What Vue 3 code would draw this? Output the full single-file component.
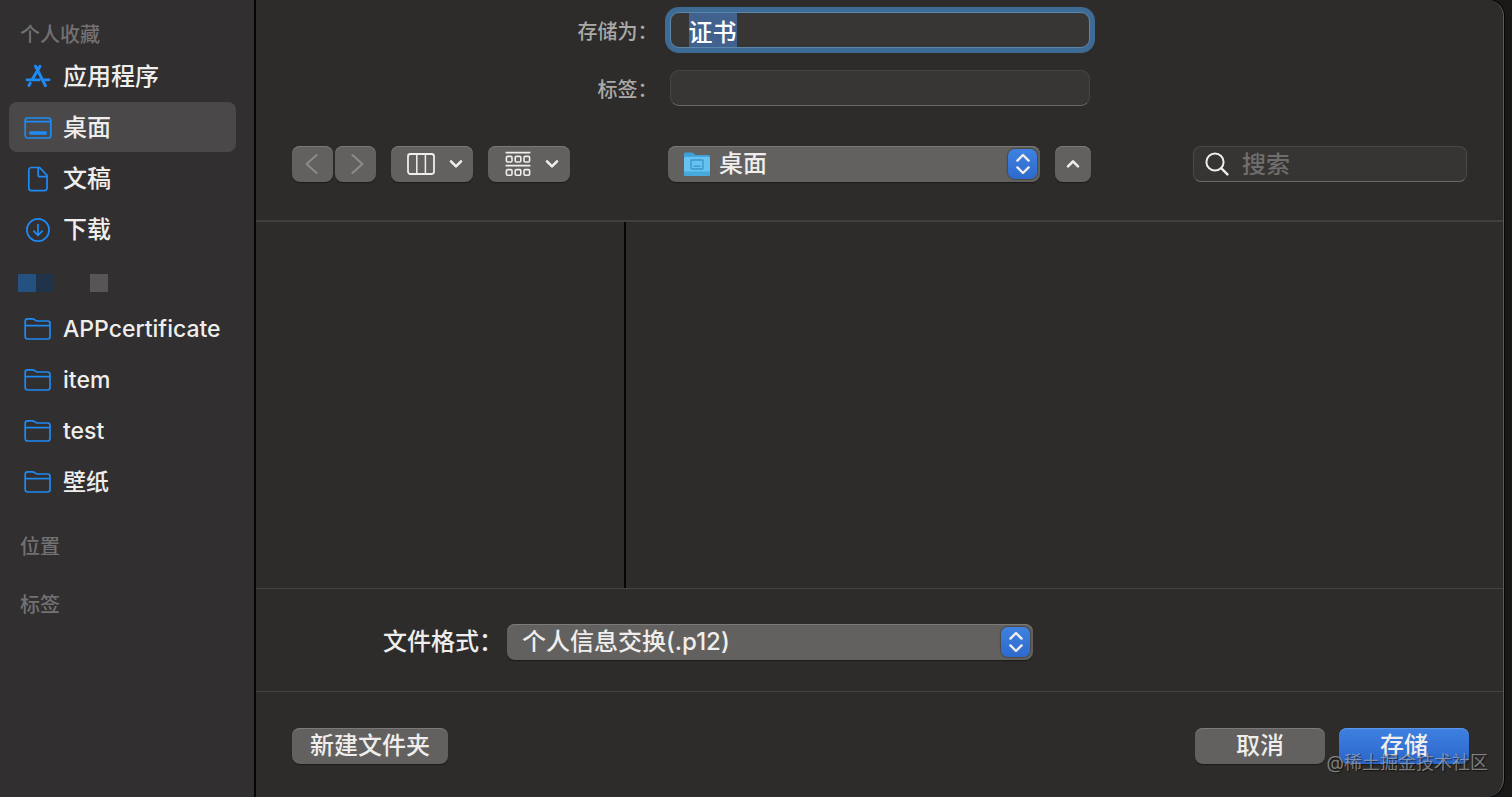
<template>
  <div class="screen">
    <div class="dialog">

      <!-- Sidebar -->
      <nav class="sidebar">
        <h2 class="section-title">个人收藏</h2>
        <ul class="places">
          <li v-for="place in places" :key="place.name">
            <a
              href="#"
              class="place"
              :class="{ active: place.name === current }"
              @click.prevent="current = place.name"
            >
              <svg class="place-icon" width="30" height="30" viewBox="0 0 30 30" fill="none"
                stroke="currentColor" stroke-width="1.7" stroke-linecap="round" stroke-linejoin="round">
                <template v-if="place.icon === 'apps'">
                  <path stroke-width="3" d="M12.6 4.2l9.8 19.4M17 4.2L9.400 17.200M7.200 21.200l-1.200 2.200"></path>
                  <path stroke-width="2.8" d="M4 17.800h12.400M21.600 17.800h4.600"></path>
                </template>
                <template v-else-if="place.icon === 'desktop'">
                  <rect x="2.200" y="5" width="25.600" height="20" rx="2.600"></rect>
                  <path d="M2.400 8.600h25.200"></path>
                  <rect x="6.200" y="18.200" width="17.600" height="3.600" rx="0.800" fill="currentColor" stroke="none"></rect>
                </template>
                <template v-else-if="place.icon === 'document'">
                  <path d="M16.600 3.500H8.400a2.600 2.600 0 0 0-2.600 2.600v18a2.600 2.600 0 0 0 2.600 2.600h13a2.600 2.600 0 0 0 2.600-2.600V11.400z"></path>
                  <path d="M15.200 3.700v7.200c0 1.200.6 1.800 1.800 1.800h6.900"></path>
                </template>
                <template v-else>
                  <circle cx="15" cy="15" r="11.100"></circle>
                  <path d="M15 9.600v10.600M10.800 16.200l4.200 4.200 4.200-4.200"></path>
                </template>
              </svg>
              {{ place.name }}
            </a>
          </li>
        </ul>

        <div class="redacted">
          <span class="tile blue"></span>
          <span class="tile navy"></span>
          <span class="tile grey"></span>
        </div>

        <ul class="places folders">
          <li v-for="folder in folders" :key="folder">
            <a
              href="#"
              class="place"
              :class="{ active: folder === current }"
              @click.prevent="current = folder"
            >
              <svg class="place-icon" width="30" height="30" viewBox="0 0 30 30" fill="none"
                stroke="currentColor" stroke-width="1.7" stroke-linejoin="round">
                <path d="M2.200 22.600V7.200c0-1.600.9-2.400 2.400-2.400h4.800c1 0 1.500.2 2.200.8l1 .8c.6.5 1 .6 1.800.6h10.200c1.600 0 2.400.9 2.400 2.400v13.200c0 1.500-.8 2.400-2.400 2.400H4.600c-1.500 0-2.400-.9-2.400-2.400z"></path>
                <path d="M2.400 11.600h24.400"></path>
              </svg>
              {{ folder }}
            </a>
          </li>
        </ul>

        <h2 class="section-title spaced">位置</h2>
        <h2 class="section-title spaced">标签</h2>
      </nav>

      <!-- Main panel -->
      <main class="panel">
        <div class="fields">
          <label for="file-name">存储为：</label>
          <input id="file-name" ref="nameInput" v-model="fileName" class="text-field" type="text" />
          <label for="file-tags">标签：</label>
          <input id="file-tags" v-model="tags" class="text-field" type="text" />
        </div>

        <div class="toolbar">
          <div class="tools">
            <div class="history">
              <button class="btn nav-btn" aria-label="后退" disabled>
                <svg width="24" height="24" viewBox="0 0 24 24" fill="none" stroke="currentColor"
                  stroke-width="2" stroke-linecap="round" stroke-linejoin="round">
                  <path d="M15.600 3L5.600 12l10 9"></path>
                </svg>
              </button>
              <button class="btn nav-btn" aria-label="前进" disabled>
                <svg width="24" height="24" viewBox="0 0 24 24" fill="none" stroke="currentColor"
                  stroke-width="2" stroke-linecap="round" stroke-linejoin="round">
                  <path d="M8.400 3l10 9-10 9"></path>
                </svg>
              </button>
            </div>
            <button class="btn view-btn" aria-label="分栏显示">
              <svg width="28" height="24" viewBox="0 0 28 24" fill="none" stroke="currentColor" stroke-width="1.8">
                <rect x="1" y="2" width="26" height="20" rx="2.400"></rect>
                <path stroke-width="1.5" d="M9.800 2v20M18.400 2v20"></path>
              </svg>
              <svg width="14" height="10" viewBox="0 0 14 10" fill="none" stroke="currentColor"
                stroke-width="2.6" stroke-linecap="round" stroke-linejoin="round">
                <path d="M2 2.400l5 5 5-5"></path>
              </svg>
            </button>
            <button class="btn view-btn" aria-label="分组方式">
              <svg width="26" height="26" viewBox="0 0 26 26" fill="none" stroke="currentColor" stroke-width="1.6">
                <path d="M.6 1.600h24.800M.6 14.600h24.800"></path>
                <rect x="1.400" y="5.400" width="5.600" height="5.600" rx="1.200"></rect>
                <rect x="10.200" y="5.400" width="5.600" height="5.600" rx="1.200"></rect>
                <rect x="19" y="5.400" width="5.600" height="5.600" rx="1.200"></rect>
                <rect x="1.400" y="18.600" width="5.600" height="5.600" rx="1.200"></rect>
                <rect x="10.200" y="18.600" width="5.600" height="5.600" rx="1.200"></rect>
                <rect x="19" y="18.600" width="5.600" height="5.600" rx="1.200"></rect>
              </svg>
              <svg width="14" height="10" viewBox="0 0 14 10" fill="none" stroke="currentColor"
                stroke-width="2.6" stroke-linecap="round" stroke-linejoin="round">
                <path d="M2 2.400l5 5 5-5"></path>
              </svg>
            </button>
          </div>

          <div class="location">
            <div class="popup location-popup">
              <svg class="folder-icon" width="28" height="28" viewBox="0 0 28 28">
                <path d="M1 4.400C1 3 1.600 2.400 3 2.400h5.600c.9 0 1.400.2 2 .8l1.200 1.200c.4.400.8.600 1.600.600H25c1.400 0 2 .6 2 2V12H1z" fill="#3f9fd8"></path>
                <rect x="1" y="6.800" width="26" height="19" rx="1.600" fill="#66c2f0"></rect>
                <path d="M1 21.600h26v2.600a1.600 1.600 0 0 1-1.600 1.600H2.600A1.600 1.600 0 0 1 1 24.200z" fill="#45a9e0"></path>
                <rect x="8" y="10" width="12" height="9" rx="0.800" fill="none" stroke="#3a94c8" stroke-width="1.3"></rect>
                <path d="M10.400 16.200h7.200" stroke="#3a94c8" stroke-width="1.3"></path>
              </svg>
              <select v-model="location" aria-label="位置">
                <option>桌面</option>
                <option>文稿</option>
                <option>下载</option>
              </select>
              <span class="stepper">
                <svg width="16" height="22" viewBox="0 0 16 22" fill="none" stroke="currentColor"
                  stroke-width="2.4" stroke-linecap="round" stroke-linejoin="round">
                  <path d="M2.400 7.600L8 2l5.600 5.600M2.400 14.400L8 20l5.600-5.600"></path>
                </svg>
              </span>
            </div>
            <button class="btn collapse-btn" aria-label="收起">
              <svg width="14" height="10" viewBox="0 0 14 10" fill="none" stroke="currentColor"
                stroke-width="2.6" stroke-linecap="round" stroke-linejoin="round">
                <path d="M2 7.400l5-5 5 5"></path>
              </svg>
            </button>
          </div>

          <label class="search">
            <svg width="24" height="24" viewBox="0 0 24 24" fill="none" stroke="currentColor"
              stroke-width="2" stroke-linecap="round">
              <circle cx="10" cy="10" r="8.600"></circle>
              <path stroke-width="2.4" d="M16.400 16.400l6 6"></path>
            </svg>
            <input v-model="query" type="search" placeholder="搜索" aria-label="搜索" />
          </label>
        </div>

        <!-- Column browser -->
        <div class="browser">
          <div class="column"></div>
          <div class="preview"></div>
        </div>

        <div class="format">
          <label for="file-format">文件格式：</label>
          <div class="popup format-popup">
            <select id="file-format" v-model="format">
              <option>个人信息交换(.p12)</option>
            </select>
            <span class="stepper">
              <svg width="16" height="22" viewBox="0 0 16 22" fill="none" stroke="currentColor"
                stroke-width="2.4" stroke-linecap="round" stroke-linejoin="round">
                <path d="M2.400 7.600L8 2l5.600 5.600M2.400 14.400L8 20l5.600-5.600"></path>
              </svg>
            </span>
          </div>
        </div>

        <footer class="actions">
          <button class="btn text-btn">新建文件夹</button>
          <div class="confirm">
            <button class="btn text-btn wide">取消</button>
            <button class="btn text-btn wide primary">存储</button>
          </div>
        </footer>
      </main>
    </div>

    <span class="watermark">@稀土掘金技术社区</span>
  </div>
</template>

<script setup>
import { ref, onMounted } from 'vue'

const places = [
  { name: '应用程序', icon: 'apps' },
  { name: '桌面', icon: 'desktop' },
  { name: '文稿', icon: 'document' },
  { name: '下载', icon: 'download' }
]
const folders = ['APPcertificate', 'item', 'test', '壁纸']

const current = ref('桌面')
const fileName = ref('证书')
const tags = ref('')
const location = ref('桌面')
const query = ref('')
const format = ref('个人信息交换(.p12)')
const nameInput = ref(null)

onMounted(() => {
  nameInput.value.focus()
  nameInput.value.select()
})
</script>

<style>
body {
  margin: 0;
  background: #191817;
}
</style>

<style scoped>
.screen {
  position: relative;
  min-height: 100vh;
  display: flex;
  padding-right: 8px;
  box-sizing: border-box;
  overflow: hidden;
  font-family: Inter, "Noto Sans CJK SC", sans-serif;
  font-size: 24px;
  font-weight: 500;
  line-height: 32px;
  color: #efeeed;
}

.dialog {
  flex: 1;
  display: flex;
  background: #2d2c2a;
  border-right: 1px solid #5d5c5a;
  border-radius: 0 16px 18px 0;
  box-shadow: 0 0 0 1px #050505;
  overflow: hidden;
}

button,
input,
select {
  font: inherit;
  color: inherit;
  box-sizing: border-box;
  margin: 0;
}

/* Sidebar */
.sidebar {
  width: 256px;
  flex-shrink: 0;
  padding: 18px 18px 0 9px;
  box-sizing: border-box;
  background: #312f30;
  border-right: 2px solid #050505;
}

.section-title {
  margin: 0;
  padding-left: 11px;
  font-size: 20px;
  line-height: 34px;
  font-weight: 500;
  color: #737172;
}

.section-title.spaced {
  margin-top: 24px;
}

.places {
  list-style: none;
  margin: -1px 0 0;
  padding: 0;
  display: flex;
  flex-direction: column;
  gap: 1px;
}

.place {
  display: flex;
  align-items: center;
  gap: 10px;
  height: 50px;
  padding: 1px 0 0 14px;
  box-sizing: border-box;
  border-radius: 8px;
  color: #efeeed;
  text-decoration: none;
}

.folders .place {
  font-size: 23px;
}

.place.active {
  background: #4a4849;
}

.place-icon {
  color: #1e8bf5;
}

.redacted {
  display: flex;
  padding: 20px 9px 12px;
}

.tile {
  width: 18px;
  height: 18px;
}

.tile.blue {
  background: #24517f;
}

.tile.navy {
  background: #203348;
}

.tile.grey {
  margin-left: 36px;
  background: #575556;
}

/* Panel */
.panel {
  flex: 1;
  min-width: 0;
  display: flex;
  flex-direction: column;
}

.fields {
  display: grid;
  grid-template-columns: 1fr 420px 1fr;
  row-gap: 22px;
  padding-top: 12px;
}

.fields label {
  grid-column: 1;
  justify-self: end;
  padding: 4px 12px 0 0;
  font-size: 20px;
  color: #aaa9a7;
}

.text-field {
  grid-column: 2;
  height: 36px;
  padding: 3px 18px;
  line-height: 28px;
  background: #383634;
  border: 1px solid #484644;
  border-bottom-color: #6a6866;
  border-radius: 9px;
  outline: none;
}

.text-field:focus {
  border-color: #5b87ad;
  box-shadow: 0 0 0 5px #3d6b94;
}

.text-field::selection {
  background: #41618f;
  color: #ffffff;
}

.toolbar {
  display: grid;
  grid-template-columns: 1fr auto 1fr;
  padding: 40px 36px 38px;
  border-bottom: 2px solid #403f3d;
}

.tools,
.history,
.location,
.confirm {
  display: flex;
}

.tools {
  gap: 15px;
}

.history {
  gap: 2px;
}

.location {
  gap: 15px;
}

.btn {
  display: flex;
  align-items: center;
  justify-content: center;
  height: 36px;
  padding: 0;
  border: none;
  border-radius: 8px;
  background: #62615f;
  box-shadow: inset 0 1px 0 #7b7a78, 0 1px 1px rgba(0, 0, 0, 0.4);
}

.nav-btn {
  width: 41px;
  color: #8c8b89;
}

.view-btn {
  width: 82px;
  padding-left: 6px;
  gap: 14px;
}

.popup {
  position: relative;
  height: 36px;
}

.popup select {
  width: 100%;
  height: 36px;
  padding: 0 40px 0 15px;
  appearance: none;
  border: none;
  border-radius: 8px;
  background: #62615f;
  box-shadow: inset 0 1px 0 #7b7a78, 0 1px 1px rgba(0, 0, 0, 0.4);
  outline: none;
}

.location-popup {
  width: 372px;
}

.location-popup select {
  padding-left: 51px;
}

.folder-icon {
  position: absolute;
  left: 15px;
  top: 4px;
}

.stepper {
  position: absolute;
  right: 3px;
  top: 3px;
  width: 29px;
  height: 30px;
  display: flex;
  align-items: center;
  justify-content: center;
  border-radius: 7px;
  background: linear-gradient(#3f82e2, #2c69cb);
  box-shadow: 0 0 1px 1px rgba(0, 0, 0, 0.25);
  pointer-events: none;
}

.collapse-btn {
  width: 36px;
}

.search {
  justify-self: end;
  display: flex;
  align-items: center;
  gap: 13px;
  width: 274px;
  height: 36px;
  padding: 0 11px;
  box-sizing: border-box;
  background: #363533;
  border: 1px solid #4a4947;
  border-bottom-color: #6a6967;
  border-radius: 8px;
}

.search input {
  flex: 1;
  min-width: 0;
  padding: 2px 0 0;
  appearance: none;
  background: none;
  border: none;
  outline: none;
}

.search input::placeholder {
  color: #6f6e6c;
  opacity: 1;
}

.browser {
  flex: 1;
  display: flex;
  min-height: 200px;
}

.column {
  width: 368px;
  border-right: 2px solid #050505;
}

.preview {
  flex: 1;
}

.format {
  display: flex;
  align-items: center;
  gap: 4px;
  padding: 35px 127px 31px;
  border-top: 1px solid #454442;
  border-bottom: 1px solid #454442;
}

.format-popup {
  width: 526px;
}

.actions {
  display: flex;
  justify-content: space-between;
  padding: 36px 34px 33px 36px;
}

.confirm {
  gap: 14px;
}

.text-btn {
  padding: 0 18px;
}

.text-btn.wide {
  width: 130px;
}

.text-btn.primary {
  background: linear-gradient(#3f80e0, #2a66cb);
  box-shadow: inset 0 1px 0 #5b95ea, 0 1px 1px rgba(0, 0, 0, 0.4);
}

.watermark {
  position: absolute;
  right: 24px;
  bottom: 18px;
  font-size: 18px;
  font-weight: 400;
  color: rgba(190, 190, 190, 0.6);
  text-shadow: 1px 1px 1px rgba(0, 0, 0, 0.6);
  pointer-events: none;
}
</style>
